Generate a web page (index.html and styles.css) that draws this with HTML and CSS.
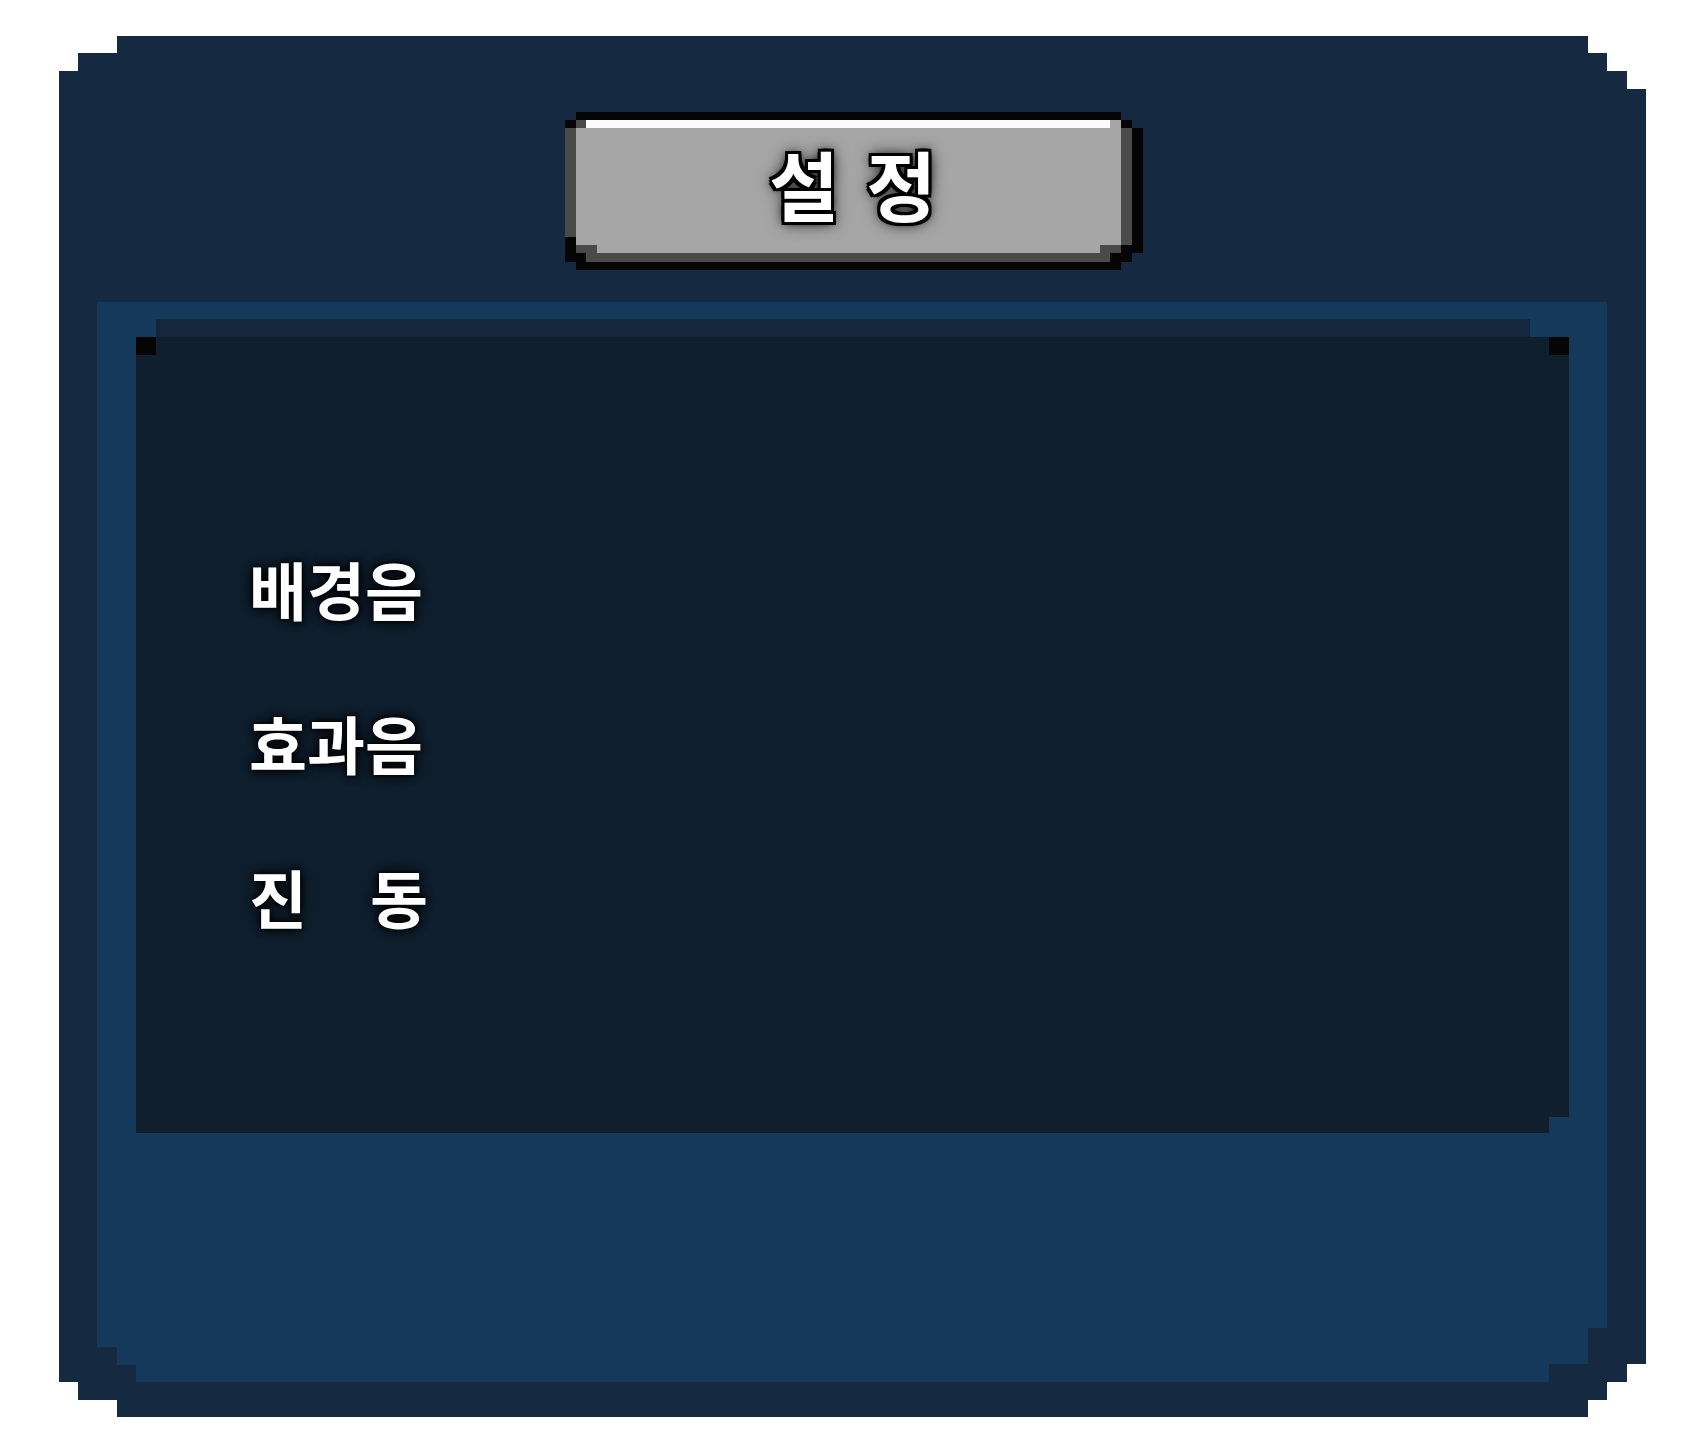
FILE: index.html
```html
<!DOCTYPE html>
<html lang="ko">
<head>
<meta charset="utf-8">
<title>설정</title>
<link rel="stylesheet" href="styles.css">
</head>
<body>
  <div class="panel">
    <div class="title-btn"><span class="title-text">설 정</span></div>
    <div class="inner">
      <div class="inner-strip"></div>
      <div class="content">
        <ul class="options">
          <li class="option">배경음</li>
          <li class="option">효과음</li>
          <li class="option">진　동</li>
        </ul>
      </div>
    </div>
  </div>
</body>
</html>
```
FILE: styles.css
```css
html, body {
  margin: 0;
  padding: 0;
  background: #ffffff;
}

body {
  padding: 36px 0 0 59px;
  font-family: "Noto Sans CJK KR", "Noto Sans", sans-serif;
}

.panel {
  width: 1587px;
  height: 1381px;
  background: #152a41;
  display: flex;
  flex-direction: column;
  clip-path: polygon(58px 0, 1529px 0, 1529px 17px, 1548px 17px, 1548px 35px, 1568px 35px, 1568px 53px, 1587px 53px, 1587px 1328px, 1568px 1328px, 1568px 1346px, 1548px 1346px, 1548px 1364px, 1529px 1364px, 1529px 1381px, 58px 1381px, 58px 1364px, 19px 1364px, 19px 1346px, 0 1346px, 0 35px, 19px 35px, 19px 17px, 58px 17px);
}

.title-btn {
  width: 578px;
  height: 158px;
  margin: 76px 0 0 506px;
  padding-bottom: 16px;
  box-sizing: border-box;
  display: flex;
  align-items: center;
  justify-content: center;
  background:
    linear-gradient(#050505, #050505) 11px 0 / 545px 8px no-repeat,
    linear-gradient(#050505, #050505) 0 8px / 11px 8px no-repeat,
    linear-gradient(#050505, #050505) 556px 8px / 11px 8px no-repeat,
    linear-gradient(#050505, #050505) 0 125px / 11px 16px no-repeat,
    linear-gradient(#050505, #050505) 0 141px / 21px 9px no-repeat,
    linear-gradient(#050505, #050505) 567px 16px / 11px 125px no-repeat,
    linear-gradient(#050505, #050505) 556px 133px / 11px 8px no-repeat,
    linear-gradient(#050505, #050505) 545px 141px / 22px 9px no-repeat,
    linear-gradient(#050505, #050505) 11px 150px / 545px 8px no-repeat,
    linear-gradient(#4a4a4a, #4a4a4a) 11px 8px / 10px 8px no-repeat,
    linear-gradient(#4a4a4a, #4a4a4a) 0 16px / 11px 109px no-repeat,
    linear-gradient(#4a4a4a, #4a4a4a) 556px 16px / 11px 117px no-repeat,
    linear-gradient(#4a4a4a, #4a4a4a) 11px 133px / 21px 8px no-repeat,
    linear-gradient(#4a4a4a, #4a4a4a) 535px 133px / 21px 8px no-repeat,
    linear-gradient(#4a4a4a, #4a4a4a) 21px 141px / 524px 9px no-repeat,
    linear-gradient(#fbfbfb, #fbfbfb) 21px 8px / 524px 8px no-repeat,
    linear-gradient(#a6a6a6, #a6a6a6) 545px 8px / 11px 8px no-repeat,
    linear-gradient(#a6a6a6, #a6a6a6) 11px 16px / 545px 117px no-repeat,
    linear-gradient(#a6a6a6, #a6a6a6) 32px 133px / 503px 8px no-repeat;
}

.title-text {
  font-size: 76px;
  font-weight: 700;
  line-height: 1;
  color: #ffffff;
  letter-spacing: 3px;
  margin-right: 0;
  text-shadow:
    -3px -3px 0 #000, 3px -3px 0 #000, -3px 3px 0 #000, 3px 3px 0 #000,
    0 -3px 0 #000, 0 3px 0 #000, -3px 0 0 #000, 3px 0 0 #000,
    0 0 10px #000, 0 0 18px rgba(0, 0, 0, 0.8);
}

.inner {
  width: 1510px;
  height: 1080px;
  margin: 32px 0 0 38px;
  padding-top: 17px;
  box-sizing: border-box;
  background: #14395b;
  clip-path: polygon(0 0, 1510px 0, 1510px 1026px, 1491px 1026px, 1491px 1062px, 1452px 1062px, 1452px 1080px, 39px 1080px, 39px 1063px, 20px 1063px, 20px 1045px, 0 1045px);
}

.inner-strip {
  width: 1374px;
  height: 18px;
  margin-left: 59px;
  background: #14273d;
}

.content {
  position: relative;
  width: 1433px;
  height: 796px;
  margin-left: 39px;
  box-sizing: border-box;
  padding: 219px 0 0 113px;
  background: #0f1f2e;
  clip-path: polygon(0 0, 100% 0, 100% 780px, 1413px 780px, 1413px 100%, 0 100%);
}

.content::before,
.content::after {
  content: "";
  position: absolute;
  top: 0;
  width: 20px;
  height: 18px;
  background: #050505;
}

.content::before { left: 0; }
.content::after { right: 0; }

.options {
  list-style: none;
  margin: 0;
  padding: 0;
  display: flex;
  flex-direction: column;
  gap: 91px;
}

.option {
  font-size: 63px;
  font-weight: 700;
  line-height: 1;
  color: #ffffff;
  text-shadow: 0 0 3px #000, 0 0 8px #000, 0 0 16px rgba(0, 0, 0, 0.85);
}
```
